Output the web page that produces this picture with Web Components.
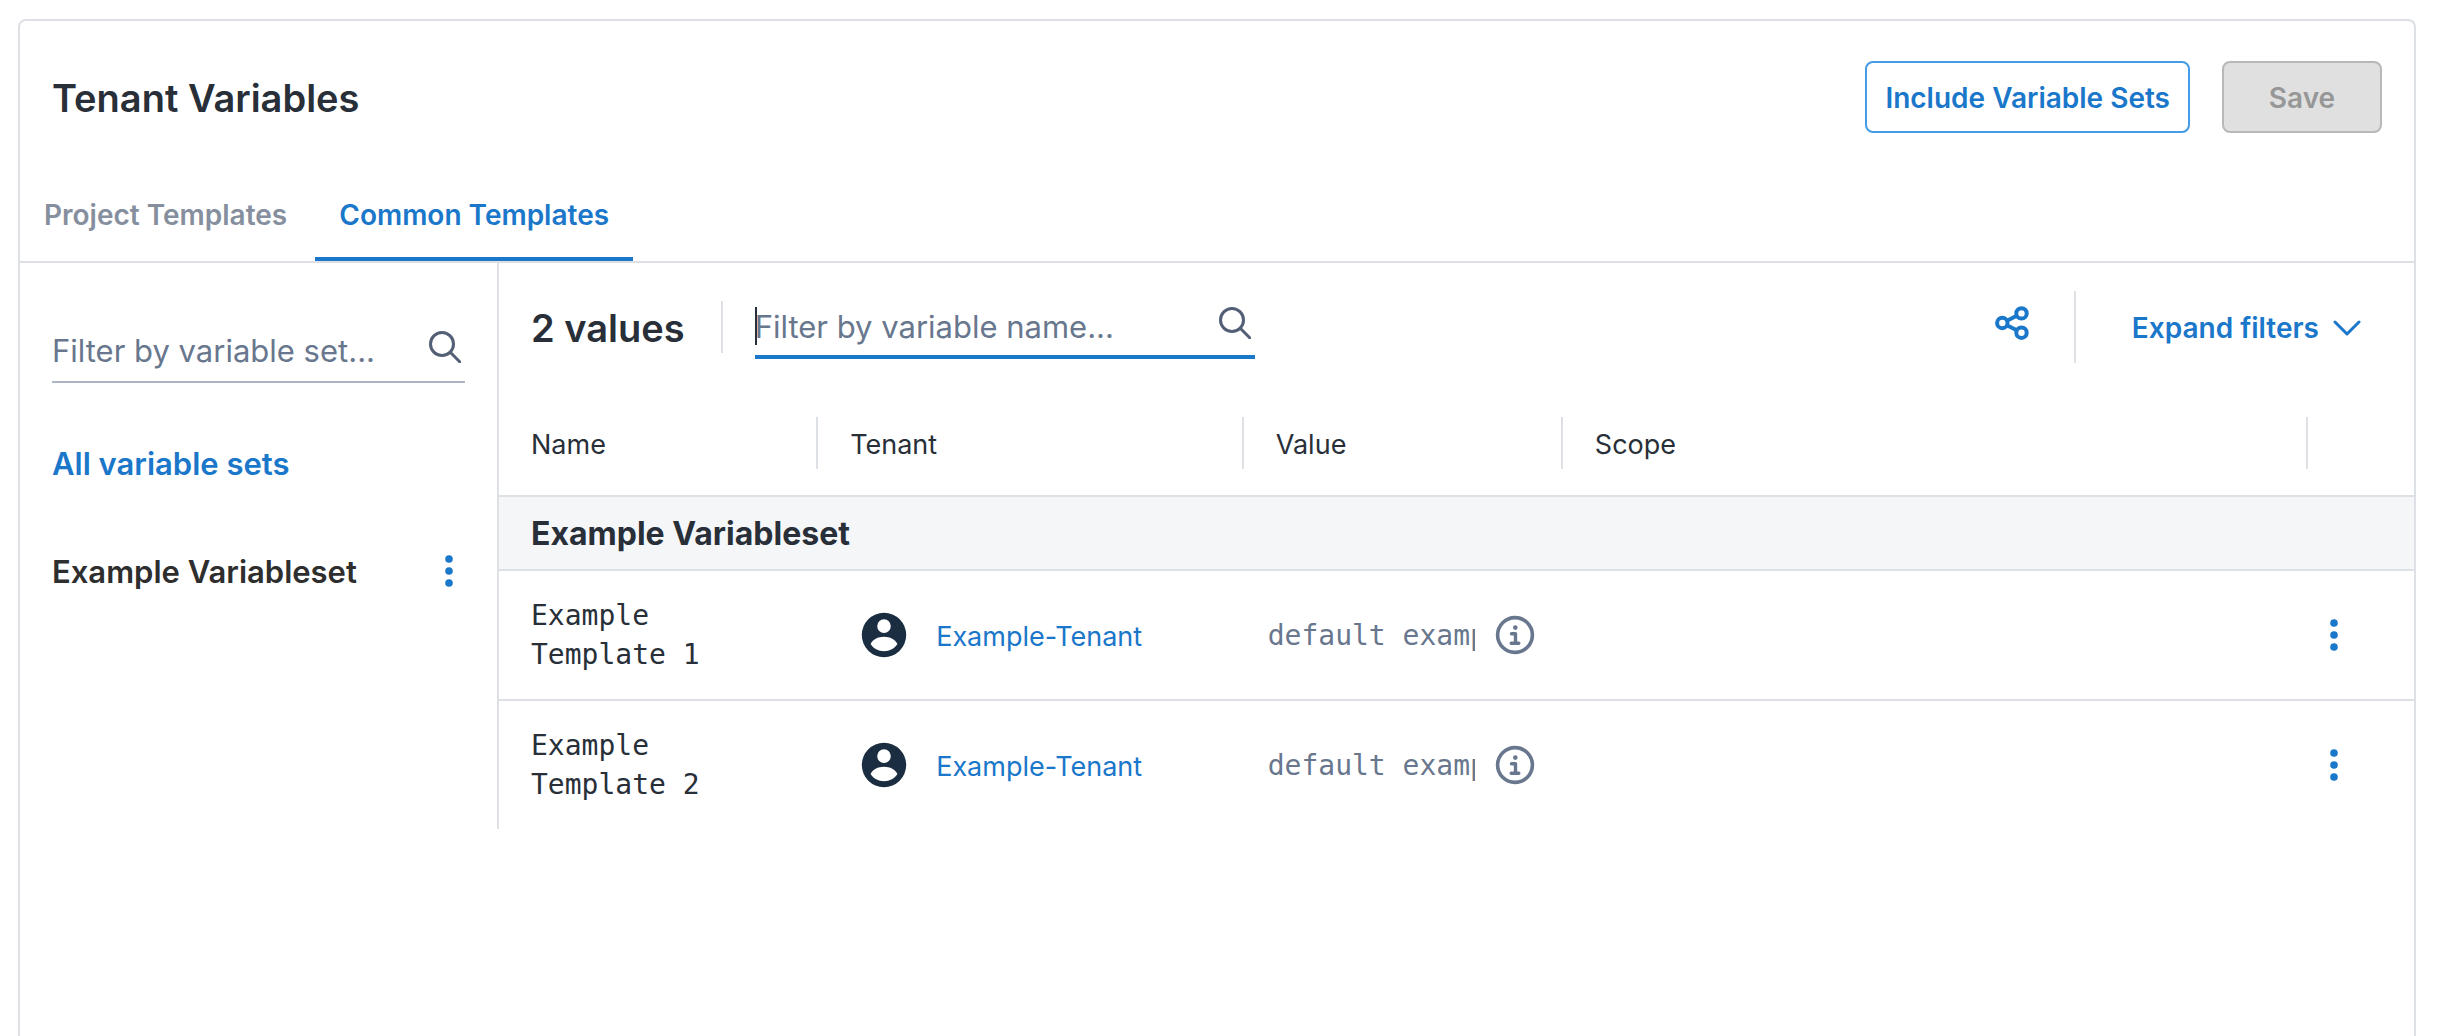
<!DOCTYPE html>
<html lang="en">
<head>
<meta charset="utf-8">
<title>Tenant Variables</title>
<style>
  :root {
    --blue: #1a77ca;
    --ink: #282f38;
    --muted: #68778d;
    --line: #dde1e6;
  }
  * { box-sizing: border-box; }
  body {
    margin: 0;
    min-height: 100vh;
    display: flex;
    background: #fff;
    color: var(--ink);
    font: 28px/40px Inter, "Liberation Sans", sans-serif;
  }
</style>
</head>
<body>
<tenant-variables-page></tenant-variables-page>

<script>
const reset = `
  *, *::before, *::after { box-sizing: border-box; }
  button { font: inherit; color: inherit; background: none; border: 0; padding: 0; margin: 0; cursor: pointer; }
  a { color: inherit; text-decoration: none; }
  svg { display: block; }
`;

function define(name, html, setup) {
  customElements.define(name, class extends HTMLElement {
    constructor() {
      super();
      const root = this.attachShadow({ mode: "open" });
      const template = document.createElement("template");
      template.innerHTML = html;
      root.append(template.content.cloneNode(true));
      if (setup) setup(this, root);
    }
  });
}

const icons = {
  search: [32, `<circle cx="13" cy="13" r="11.500" fill="none" stroke="currentColor" stroke-width="3"/><path d="M21.500 21.500 30.700 30.700" fill="none" stroke="currentColor" stroke-width="3" stroke-linecap="round"/>`],
  share: [36, `<g fill="none" stroke="currentColor" stroke-width="4"><circle cx="8.300" cy="18" r="5.200"/><circle cx="27.500" cy="8.400" r="5.200"/><circle cx="27.500" cy="27.700" r="5.200"/><path d="M12.900 15.700 22.800 10.800M12.900 20.300 22.800 25.300"/></g>`],
  chevron: [28, `<path d="M2 8 14 20 26 8" fill="none" stroke="currentColor" stroke-width="3" stroke-linecap="round" stroke-linejoin="round"/>`],
  dots: [32, `<g fill="currentColor"><circle cx="16" cy="4" r="3.800"/><circle cx="16" cy="16" r="3.800"/><circle cx="16" cy="28" r="3.800"/></g>`],
  user: [48, `<path fill="currentColor" fill-rule="evenodd" d="M24 1.800a22.200 22.200 0 1 0 0 44.400 22.200 22.200 0 0 0 0-44.400Zm0 6.500a6.800 6.800 0 1 1 0 13.600 6.800 6.800 0 0 1 0-13.600Zm0 32c-5.600 0-10.800-2.700-13.400-7.200 1.800-4.700 7.500-7.400 13.400-7.400s11.600 2.700 13.400 7.400C34.800 37.600 29.600 40.300 24 40.300Z"/>`],
  info: [40, `<circle cx="20" cy="20" r="17.400" fill="none" stroke="currentColor" stroke-width="3.600"/><circle cx="20.300" cy="12.600" r="2.300" fill="currentColor"/><path d="M16.500 18.800h4v9M16.200 28.200h7.600" fill="none" stroke="currentColor" stroke-width="3.400" stroke-linecap="round" stroke-linejoin="round"/>`]
};

define("ui-icon", `<style>:host { display: block; flex: none; } svg { display: block; }</style>`, (host, root) => {
  const [size, art] = icons[host.getAttribute("name")];
  root.innerHTML += `<svg width="${size}" height="${size}" viewBox="0 0 ${size} ${size}" aria-hidden="true">${art}</svg>`;
});

define("ui-button", `<style>${reset}
  :host { display: block; }
  button {
    height: 72px; min-width: 160px; padding: 2px 18px 0;
    border: 2px solid #449be6; border-radius: 8px;
    color: var(--blue); background: #fff; font-weight: 600;
  }
  button:disabled { color: #979797; background: #e0e0e0; border-color: #b8b8b8; cursor: default; }
</style><button type="button"><slot></slot></button>`, (host, root) => {
  root.querySelector("button").disabled = host.hasAttribute("disabled");
});

define("ui-tabs", `<style>${reset}
  :host { display: block; border-bottom: 2px solid var(--line); }
  nav { display: flex; gap: 4px; }
  a { padding: 30px 24px 22px; border-bottom: 4px solid transparent; font-weight: 600; color: #868f9e; }
  a[aria-current] { color: var(--blue); border-color: var(--blue); }
</style><nav aria-label="Templates"><a href="#project">Project Templates</a><a href="#common" aria-current="page">Common Templates</a></nav>`);

define("ui-search", `<style>${reset}
  :host { display: block; }
  label { display: flex; align-items: center; height: 64px; border-bottom: 2px solid #adb4c4; }
  :host([active]) label { padding-top: 2px; border-bottom: 4px solid var(--blue); }
  input {
    flex: 1; min-width: 0; height: 48px; padding: 0; border: 0; outline: 0; background: none;
    font: inherit; font-size: 31px; color: var(--ink); caret-color: transparent;
  }
  :host([active]) .caret { width: 2px; height: 38px; margin-right: -2px; background: var(--ink); }
  input::placeholder { color: var(--muted); opacity: 1; }
  ui-icon { color: #525f75; margin: 0 4px 6px 0; }
</style><label><span class="caret"></span><input type="text"><ui-icon name="search"></ui-icon></label>`, (host, root) => {
  const input = root.querySelector("input");
  input.placeholder = host.getAttribute("placeholder");
  input.setAttribute("aria-label", input.placeholder);
});

define("ui-menu-button", `<style>${reset}
  :host { display: block; }
  button { display: block; color: var(--blue); }
</style><button type="button" aria-label="More actions"><ui-icon name="dots"></ui-icon></button>`);

define("variable-set-list", `<style>${reset}
  :host { display: block; flex: none; width: 479px; padding: 56px 32px 32px; border-right: 2px solid var(--line); }
  ul { list-style: none; margin: 26px 0 0; padding: 0; font-size: 31px; font-weight: 600; }
  li { display: flex; justify-content: space-between; align-items: center; height: 108px; color: #2e2e2e; }
  a { padding-top: 2px; }
  .all { color: var(--blue); }
</style>
<ui-search placeholder="Filter by variable set..."></ui-search>
<ul>
  <li><a class="all" href="#all">All variable sets</a></li>
  <li><a href="#example">Example Variableset</a><ui-menu-button></ui-menu-button></li>
</ul>`);

define("variables-toolbar", `<style>${reset}
  :host { display: flex; align-items: center; height: 128px; padding: 0 53px 0 32px; }
  h2 { margin: 0; padding-top: 2px; font-size: 38px; font-weight: 600; line-height: 48px; white-space: nowrap; }
  .rule { width: 2px; height: 52px; margin: 0 32px 0 36px; background: var(--line); }
  ui-search { width: 500px; }
  .share { margin: 0 0 8px auto; color: var(--blue); }
  .tall { height: 72px; margin: 0 56px 0 44px; }
  .expand { display: flex; align-items: center; gap: 14px; padding-top: 2px; color: var(--blue); font-weight: 600; white-space: nowrap; }
</style>
<h2>2 values</h2><span class="rule"></span>
<ui-search active placeholder="Filter by variable name..."></ui-search>
<button class="share" type="button" aria-label="Share"><ui-icon name="share"></ui-icon></button>
<span class="rule tall"></span>
<button class="expand" type="button">Expand filters<ui-icon name="chevron"></ui-icon></button>`);

const row = n => `<tr>
  <td class="name">Example Template ${n}</td>
  <td><div class="tenant"><ui-icon name="user"></ui-icon><a href="#tenant">Example-Tenant</a></div></td>
  <td class="value"><div><input type="text" placeholder="default example" aria-label="Value of Example Template ${n}"><ui-icon name="info"></ui-icon></div></td>
  <td></td>
  <td><ui-menu-button></ui-menu-button></td>
</tr>`;

define("variables-table", `<style>${reset}
  :host { display: block; }
  table { width: 100%; table-layout: fixed; border-collapse: separate; border-spacing: 0; text-align: left; font-size: 27px; }
  .c1 { width: 16.6666%; } .c2 { width: 22.2222%; } .c4 { width: 38.8889%; } .c5 { width: 5.5556%; }
  thead th { height: 106px; padding: 0; font-weight: 400; border-bottom: 2px solid var(--line); }
  thead th div { height: 52px; padding: 8px 30px 0 32px; border-right: 2px solid var(--line); }
  thead th:last-child div { border: 0; }
  .group { height: 74px; padding: 2px 32px 0; font-size: 32px; font-weight: 700; background: #f4f6f8; border-bottom: 2px solid var(--line); }
  td { height: 130px; padding: 0 32px; border-bottom: 2px solid var(--line); }
  tr:last-child td { height: 128px; border-bottom: 0; }
  td:last-child { padding: 0 10px; }
  .name, .value { font-family: "DejaVu Sans Mono", monospace; font-size: 28px; line-height: 39px; }
  .name { padding-right: 80px; }
  .tenant { display: flex; align-items: center; gap: 28px; margin-left: 10px; color: var(--blue); }
  .tenant a { padding-top: 4px; }
  .tenant ui-icon { color: #1b2d40; }
  .value { padding: 0 0 0 24px; }
  .value div { display: flex; align-items: center; gap: 20px; color: var(--muted); }
  .value input { flex: none; width: 207px; height: 40px; padding: 0; border: 0; outline: 0; background: none; font: inherit; color: var(--ink); }
  .value input::placeholder { color: var(--muted); opacity: 1; }
</style>
<table>
  <colgroup><col class="c1"><col class="c2"><col class="c1"><col class="c4"><col class="c5"></colgroup>
  <thead><tr>
    <th scope="col"><div>Name</div></th><th scope="col"><div>Tenant</div></th><th scope="col"><div>Value</div></th><th scope="col"><div>Scope</div></th><th><div></div></th>
  </tr></thead>
  <tbody>
    <tr><th class="group" colspan="5" scope="rowgroup">Example Variableset</th></tr>
    ${row(1)}${row(2)}
  </tbody>
</table>`);

define("tenant-variables-page", `<style>${reset}
  :host { display: flex; flex: 1; min-width: 0; padding: 19px 32px 0 18px; }
  .card { flex: 1; min-width: 0; border: 2px solid var(--line); border-bottom: 0; border-radius: 8px 8px 0 0; }
  header { display: flex; align-items: center; gap: 32px; padding: 40px 32px 32px; }
  h1 { flex: 1; margin: 0; padding-top: 2px; font-size: 38px; font-weight: 600; line-height: 48px; }
  .body { display: flex; align-items: stretch; }
  main { flex: 1; min-width: 0; }
</style>
<div class="card">
  <header><h1>Tenant Variables</h1><ui-button>Include Variable Sets</ui-button><ui-button disabled>Save</ui-button></header>
  <ui-tabs></ui-tabs>
  <div class="body">
    <variable-set-list></variable-set-list>
    <main><variables-toolbar></variables-toolbar><variables-table></variables-table></main>
  </div>
</div>`);
</script>
</body>
</html>
